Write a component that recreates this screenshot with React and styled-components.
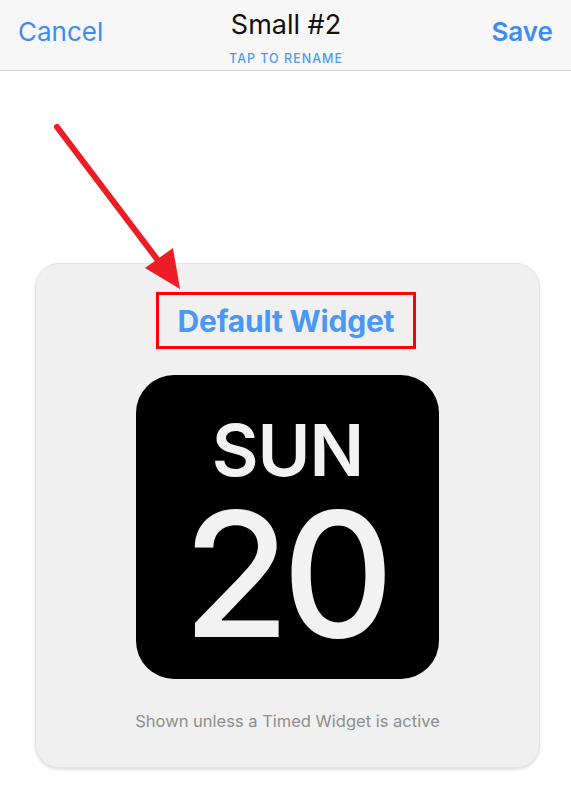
import styled, { createGlobalStyle } from "styled-components";

const Global = createGlobalStyle`
  body {
    margin: 0;
    background: #ffffff;
    font-family: Inter, "Noto Sans", sans-serif;
  }
`;

const Page = styled.div`
  width: 571px;
  height: 787px;
  position: relative;
  overflow: hidden;
`;

const Header = styled.div`
  height: 71px;
  background: #f7f7f7;
  border-bottom: 1px solid #cfcfcf;
  display: grid;
  grid-template-columns: 1fr auto 1fr;
  align-items: start;
  padding: 0 18px;
  box-sizing: border-box;
`;

const NavButton = styled.div`
  color: #3f8cf0;
  font-size: 26px;
  font-weight: ${(p) => (p.bold ? 600 : 400)};
  margin-top: 16px;
  line-height: 32px;
  justify-self: ${(p) => (p.right ? "end" : "start")};
`;

const TitleBlock = styled.div`
  display: flex;
  flex-direction: column;
  align-items: center;
  padding-top: 8px;
  margin-left: 1px;
`;

const Title = styled.div`
  font-size: 27px;
  color: #111;
  line-height: 34px;
`;

const Rename = styled.div`
  font-size: 12.5px;
  font-weight: 500;
  letter-spacing: 1px;
  color: #4f9af2;
  margin-top: 9px;
`;

const Body = styled.div`
  display: flex;
  justify-content: center;
  padding-top: 192px;
`;

const Card = styled.div`
  width: 505px;
  height: 505px;
  margin-left: 4px;
  box-sizing: border-box;
  background: #f0f0f0;
  border: 1px solid #e4e4e4;
  border-radius: 24px;
  box-shadow: 0 2px 3px rgba(0, 0, 0, 0.12);
  display: flex;
  flex-direction: column;
  align-items: center;
  padding-top: 28px;
`;

const Highlight = styled.div`
  width: 260px;
  height: 57px;
  box-sizing: border-box;
  border: 3px solid #ff0000;
  display: flex;
  align-items: center;
  justify-content: center;
  margin-left: -3px;
`;

const WidgetName = styled.div`
  color: #4a97f4;
  font-size: 30px;
  font-weight: 700;
  letter-spacing: -0.2px;
`;

const Tile = styled.div`
  width: 303px;
  height: 304px;
  margin-top: 26px;
  background: #000;
  border-radius: 38px;
  display: flex;
  flex-direction: column;
  align-items: center;
  padding-top: 39px;
  box-sizing: border-box;
  color: #f2f2f2;
`;

const Day = styled.div`
  font-size: 72px;
  font-weight: 600;
  line-height: 72px;
  letter-spacing: -1px;
`;

const DateNum = styled.div`
  font-size: 174px;
  font-weight: 500;
  line-height: 176px;
  letter-spacing: -8px;
  margin-left: -6px;
`;

const Caption = styled.div`
  margin-top: 32px;
  font-size: 16.5px;
  color: #8e8e8e;
`;

const Annotation = styled.svg`
  position: absolute;
  left: 0;
  top: 0;
  pointer-events: none;
`;

export default function App() {
  return (
    <Page>
      <Global />
      <Header>
        <NavButton>Cancel</NavButton>
        <TitleBlock>
          <Title>Small #2</Title>
          <Rename>TAP TO RENAME</Rename>
        </TitleBlock>
        <NavButton bold right>
          Save
        </NavButton>
      </Header>
      <Body>
        <Card>
          <Highlight>
            <WidgetName>Default Widget</WidgetName>
          </Highlight>
          <Tile>
            <Day>SUN</Day>
            <DateNum>20</DateNum>
          </Tile>
          <Caption>Shown unless a Timed Widget is active</Caption>
        </Card>
      </Body>
      <Annotation width="571" height="787">
        <line x1="57" y1="127" x2="163" y2="267" stroke="#ee1c25" strokeWidth="6" strokeLinecap="round" />
        <polygon points="180,289 145,268 173,248" fill="#ee1c25" />
      </Annotation>
    </Page>
  );
}
